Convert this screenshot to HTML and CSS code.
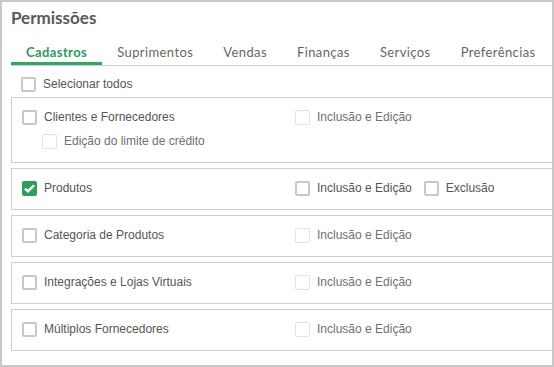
FILE: index.html
```html
<!DOCTYPE html>
<html lang="pt-BR">
<head>
    <meta charset="UTF-8">
    <title>Permissões</title>
    <link rel="stylesheet" href="styles.css">
</head>
<body>
    <div class="panel">
        <h1 class="title">Permissões</h1>

        <div class="tabs">
            <span class="tab active">Cadastros</span>
            <span class="tab">Suprimentos</span>
            <span class="tab">Vendas</span>
            <span class="tab">Finanças</span>
            <span class="tab">Serviços</span>
            <span class="tab">Preferências</span>
        </div>

        <label class="check select-all"><span class="box"></span>Selecionar todos</label>

        <div class="card">
            <div class="main">
                <label class="check"><span class="box"></span>Clientes e Fornecedores</label>
                <label class="check sub disabled"><span class="box"></span>Edição do limite de crédito</label>
            </div>
            <div class="options">
                <label class="check disabled"><span class="box"></span>Inclusão e Edição</label>
            </div>
        </div>

        <div class="card">
            <div class="main">
                <label class="check"><span class="box checked"></span>Produtos</label>
            </div>
            <div class="options">
                <label class="check"><span class="box"></span>Inclusão e Edição</label>
                <label class="check"><span class="box"></span>Exclusão</label>
            </div>
        </div>

        <div class="card">
            <div class="main">
                <label class="check"><span class="box"></span>Categoria de Produtos</label>
            </div>
            <div class="options">
                <label class="check disabled"><span class="box"></span>Inclusão e Edição</label>
            </div>
        </div>

        <div class="card">
            <div class="main">
                <label class="check"><span class="box"></span>Integrações e Lojas Virtuais</label>
            </div>
            <div class="options">
                <label class="check disabled"><span class="box"></span>Inclusão e Edição</label>
            </div>
        </div>

        <div class="card">
            <div class="main">
                <label class="check"><span class="box"></span>Múltiplos Fornecedores</label>
            </div>
            <div class="options">
                <label class="check disabled"><span class="box"></span>Inclusão e Edição</label>
            </div>
        </div>
    </div>
</body>
</html>
```

FILE: styles.css
```css
* {
    margin: 0;
    padding: 0;
    box-sizing: border-box;
}

body {
    font-family: "Liberation Sans", Arial, sans-serif;
    background: #fff;
}

.panel {
    width: 554px;
    height: 367px;
    border: 2px solid #c9c9c9;
    padding: 6px 0 0 9px;
    overflow: hidden;
}

.title {
    font-family: Lato, "Open Sans", sans-serif;
    font-size: 17px;
    font-weight: 700;
    color: #595959;
    line-height: 20px;
}

.tabs {
    display: flex;
    margin-top: 15px;
    border-bottom: 1px solid #cfcfcf;
}

.tab {
    font-family: Lato, "Open Sans", sans-serif;
    font-size: 13px;
    letter-spacing: 0.4px;
    color: #666;
    padding: 1px 15px 2px;
    line-height: 16px;
    border-bottom: 3px solid transparent;
}

.tab.active {
    color: #2b9b55;
    font-weight: 700;
    border-bottom-color: #33a55d;
}

.check {
    display: flex;
    align-items: center;
    gap: 7px;
    height: 18px;
    font-size: 12px;
    color: #555;
    white-space: nowrap;
}

.box {
    width: 15px;
    height: 15px;
    border: 2px solid #c8c8c8;
    border-radius: 2px;
    background: #fff;
    flex-shrink: 0;
}

.disabled .box {
    border: 1px solid #e2e2e2;
}

.disabled {
    color: #707070;
}

.box.checked {
    border-color: #2f9d5b;
    background: #2f9d5b url("data:image/svg+xml,%3Csvg xmlns='http://www.w3.org/2000/svg' viewBox='0 0 15 15'%3E%3Cpath d='M3 7.6l2.9 2.8L12 4.3' fill='none' stroke='%23fff' stroke-width='2.4'/%3E%3C/svg%3E") center / 15px 15px no-repeat;
}

.select-all {
    margin: 9px 0 4px 10px;
}

.card {
    display: flex;
    width: 560px;
    border: 1px solid #cfcfcf;
    padding: 10px 0 12px 10px;
    margin-bottom: 5px;
}

.main {
    width: 273px;
}

.sub {
    margin: 6px 0 0 20px;
}

.options {
    display: flex;
    gap: 12px;
}
```
